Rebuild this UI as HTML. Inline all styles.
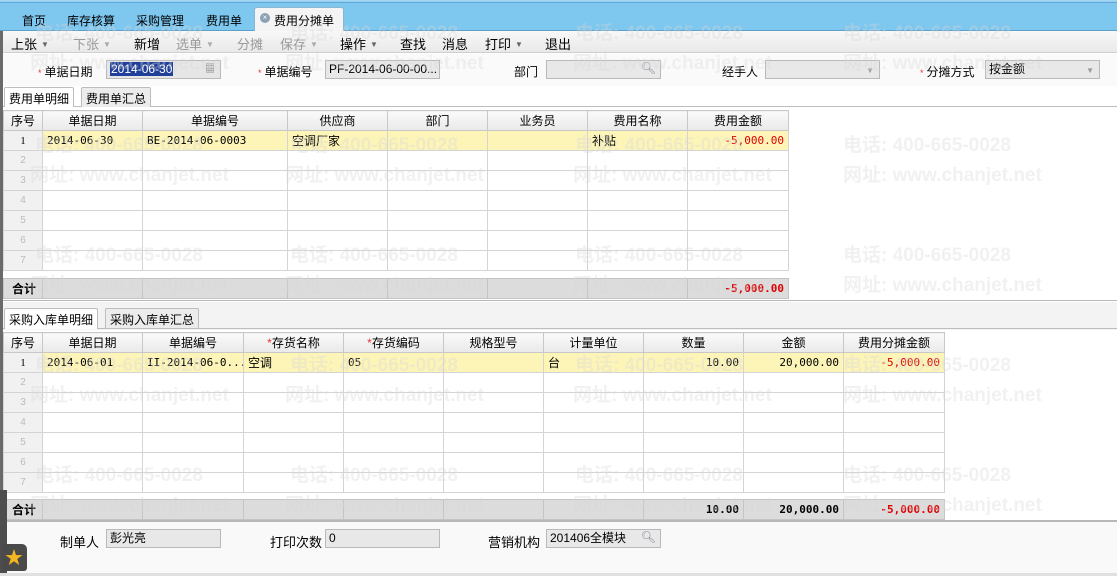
<!DOCTYPE html>
<html><head><meta charset="utf-8"><style>
*{margin:0;padding:0;box-sizing:border-box}
body{width:1117px;height:576px;overflow:hidden;background:#fff;font:12px "Liberation Sans","Noto Sans CJK SC",sans-serif;color:#000;position:relative}
.a{position:absolute}
.wm{position:absolute;color:#d8d8d8;font:bold 19px "Liberation Sans","Noto Sans CJK SC",sans-serif;white-space:nowrap;z-index:5;pointer-events:none;opacity:.35}
.tb span{position:absolute;top:34px;font-size:13px}
.dis{color:#999}
.arr{font-size:8px;color:#666;margin-left:4px;vertical-align:2px}
.inp{position:absolute;height:19px;border:1px solid #b9b9b9;background:#e8e8e8;font-size:12px;padding:1px 3px;line-height:15px;white-space:nowrap;overflow:hidden}
.lbl{position:absolute;font-size:12px}
.req{color:#e33;font-size:9px;margin-right:3px}
table{position:absolute;border-collapse:collapse;table-layout:fixed}
td{border:1px solid #d4d4d4;height:20px;font-size:12px;padding:0 4px;white-space:nowrap;overflow:hidden}
tr.h td{background:linear-gradient(#fafafa,#e9e9e9);text-align:center;border-color:#c8c8c8}
td.s{background:#f1f1f1;color:#bbb;font-size:10px;text-align:center;padding:0}
tr.y td{background:#fdf5b8;font-family:"DejaVu Sans Mono","Liberation Mono","Noto Sans CJK SC",monospace;font-size:11px}
tr.y td.s{color:#000;background:#f1f1f1;font-family:"Liberation Serif",serif;font-size:11px}
tr.t td{background:#dcdcdc;border-color:#c4c4c4;font-weight:bold;font-family:"DejaVu Sans Mono","Liberation Mono","Noto Sans CJK SC",monospace;font-size:11px}
.r{text-align:right}.red{color:#d00}
.tab{position:absolute;height:20px;border:1px solid #bdbdbd;border-bottom:none;background:#ececec;font-size:12px;padding:2px 4px;border-radius:2px 2px 0 0}
</style></head><body>
<div class="a" style="left:0;top:0;width:1117px;height:31px;background:linear-gradient(#a8d8f4,#7ec7ef 12%,#7ec7ef);border-bottom:1px solid #5d9fc8"></div>
<div class="a" style="left:0;top:2px;width:1117px;height:1px;background:#5ea7d6"></div>
<div class="a" style="top:12px;left:22px;font-size:12px">首页</div>
<div class="a" style="top:12px;left:67px;font-size:12px">库存核算</div>
<div class="a" style="top:12px;left:136px;font-size:12px">采购管理</div>
<div class="a" style="top:12px;left:206px;font-size:12px">费用单</div>
<div class="a" style="top:7px;left:254px;height:24px;width:90px;background:#f4f4f4;border:1px solid #8bb6d3;border-bottom:none;border-radius:3px 3px 0 0"></div>
<div class="a" style="top:13px;left:260px;width:10px;height:10px;border-radius:50%;background:#8aa0b4;color:#fff;font-size:8px;line-height:10px;text-align:center">×</div>
<div class="a" style="top:12px;left:274px;font-size:12px">费用分摊单</div>
<div class="a" style="left:0;top:31px;width:1117px;height:22px;background:linear-gradient(#f8f8f8,#e9e9e9);border-bottom:1px solid #cfcfcf"></div>
<div class="tb">
<span style="left:11px">上张<i class="arr">▼</i></span>
<span style="left:73px" class="dis">下张<i class="arr" style="color:#aaa">▼</i></span>
<span style="left:134px">新增</span>
<span style="left:176px" class="dis">选单<i class="arr" style="color:#aaa">▼</i></span>
<span style="left:237px" class="dis">分摊</span>
<span style="left:280px" class="dis">保存<i class="arr" style="color:#aaa">▼</i></span>
<span style="left:340px">操作<i class="arr">▼</i></span>
<span style="left:400px">查找</span>
<span style="left:442px">消息</span>
<span style="left:485px">打印<i class="arr">▼</i></span>
<span style="left:545px">退出</span>
</div>
<div class="a" style="left:0;top:54px;width:1117px;height:32px;background:#fafafa"></div>
<div class="lbl" style="left:38px;top:63px"><span class="req">*</span>单据日期</div>
<div class="inp" style="left:106px;top:60px;width:115px;background:#e6e6e6"><span style="background:#1f3f9a;color:#fff;padding:0 1px">2014-06-30</span><span style="position:absolute;right:5px;top:1px;color:#777;font-size:10px">▦</span></div>
<div class="lbl" style="left:258px;top:63px"><span class="req">*</span>单据编号</div>
<div class="inp" style="left:325px;top:60px;width:115px">PF-2014-06-00-00...</div>
<div class="lbl" style="left:514px;top:63px">部门</div>
<div class="inp" style="left:546px;top:60px;width:115px"><span style="position:absolute;right:4px;top:0;color:#889">🔍︎</span></div>
<div class="lbl" style="left:722px;top:63px">经手人</div>
<div class="inp" style="left:765px;top:60px;width:115px"><span style="position:absolute;right:5px;top:2px;font-size:8px;color:#999">▼</span></div>
<div class="lbl" style="left:920px;top:63px"><span class="req">*</span>分摊方式</div>
<div class="inp" style="left:985px;top:60px;width:115px">按金额<span style="position:absolute;right:5px;top:2px;font-size:8px;color:#999">▼</span></div>
<div class="a" style="left:0;top:106px;width:1117px;height:1px;background:#bdbdbd"></div>
<div class="tab" style="left:4px;top:87px;background:#fff;height:20px">费用单明细</div>
<div class="tab" style="left:81px;top:87px">费用单汇总</div>
<table style="left:3px;top:110px;width:785px">
<colgroup><col style="width:39px"><col style="width:100px"><col style="width:145px"><col style="width:100px"><col style="width:100px"><col style="width:100px"><col style="width:100px"><col style="width:101px"></colgroup>
<tr class="h"><td style="padding:0">序号</td><td>单据日期</td><td>单据编号</td><td>供应商</td><td>部门</td><td>业务员</td><td>费用名称</td><td>费用金额</td></tr>
<tr class="y"><td class="s">1</td><td>2014-06-30</td><td>BE-2014-06-0003</td><td style="font-family:'Liberation Sans','Noto Sans CJK SC',sans-serif;font-size:12px">空调厂家</td><td></td><td></td><td style="font-family:'Liberation Sans','Noto Sans CJK SC',sans-serif;font-size:12px">补贴</td><td class="r red">-5,000.00</td></tr>
<tr><td class="s">2</td><td></td><td></td><td></td><td></td><td></td><td></td><td></td></tr>
<tr><td class="s">3</td><td></td><td></td><td></td><td></td><td></td><td></td><td></td></tr>
<tr><td class="s">4</td><td></td><td></td><td></td><td></td><td></td><td></td><td></td></tr>
<tr><td class="s">5</td><td></td><td></td><td></td><td></td><td></td><td></td><td></td></tr>
<tr><td class="s">6</td><td></td><td></td><td></td><td></td><td></td><td></td><td></td></tr>
<tr><td class="s">7</td><td></td><td></td><td></td><td></td><td></td><td></td><td></td></tr>
</table>
<table style="left:3px;top:278px;width:785px">
<colgroup><col style="width:39px"><col style="width:100px"><col style="width:145px"><col style="width:100px"><col style="width:100px"><col style="width:100px"><col style="width:100px"><col style="width:101px"></colgroup>
<tr class="t"><td style="padding:0 0 0 8px;font-family:'Liberation Sans','Noto Sans CJK SC',sans-serif;font-size:12px">合计</td><td></td><td></td><td></td><td></td><td></td><td></td><td class="r red">-5,000.00</td></tr>
</table>
<div class="a" style="left:0;top:300px;width:1117px;height:1px;background:#b8b8b8"></div>
<div class="a" style="left:0;top:302px;width:1117px;height:28px;background:#f3f3f3"></div>
<div class="a" style="left:0;top:328px;width:1117px;height:1px;background:#bdbdbd"></div>
<div class="tab" style="left:4px;top:308px;background:#fff;height:21px">采购入库单明细</div>
<div class="tab" style="left:105px;top:308px">采购入库单汇总</div>
<table style="left:3px;top:332px;width:941px">
<colgroup><col style="width:39px"><col style="width:100px"><col style="width:101px"><col style="width:100px"><col style="width:100px"><col style="width:100px"><col style="width:100px"><col style="width:100px"><col style="width:100px"><col style="width:101px"></colgroup>
<tr class="h"><td style="padding:0">序号</td><td>单据日期</td><td>单据编号</td><td><span style="color:#e33">*</span>存货名称</td><td><span style="color:#e33">*</span>存货编码</td><td>规格型号</td><td>计量单位</td><td>数量</td><td>金额</td><td>费用分摊金额</td></tr>
<tr class="y"><td class="s">1</td><td>2014-06-01</td><td>II-2014-06-0...</td><td style="font-family:'Liberation Sans','Noto Sans CJK SC',sans-serif;font-size:12px">空调</td><td>05</td><td></td><td style="font-family:'Liberation Sans','Noto Sans CJK SC',sans-serif;font-size:12px">台</td><td class="r">10.00</td><td class="r">20,000.00</td><td class="r red">-5,000.00</td></tr>
<tr><td class="s">2</td><td></td><td></td><td></td><td></td><td></td><td></td><td></td><td></td><td></td></tr>
<tr><td class="s">3</td><td></td><td></td><td></td><td></td><td></td><td></td><td></td><td></td><td></td></tr>
<tr><td class="s">4</td><td></td><td></td><td></td><td></td><td></td><td></td><td></td><td></td><td></td></tr>
<tr><td class="s">5</td><td></td><td></td><td></td><td></td><td></td><td></td><td></td><td></td><td></td></tr>
<tr><td class="s">6</td><td></td><td></td><td></td><td></td><td></td><td></td><td></td><td></td><td></td></tr>
<tr><td class="s">7</td><td></td><td></td><td></td><td></td><td></td><td></td><td></td><td></td><td></td></tr>
</table>
<table style="left:3px;top:499px;width:941px">
<colgroup><col style="width:39px"><col style="width:100px"><col style="width:101px"><col style="width:100px"><col style="width:100px"><col style="width:100px"><col style="width:100px"><col style="width:100px"><col style="width:100px"><col style="width:101px"></colgroup>
<tr class="t"><td style="padding:0 0 0 8px;font-family:'Liberation Sans','Noto Sans CJK SC',sans-serif;font-size:12px">合计</td><td></td><td></td><td></td><td></td><td></td><td></td><td class="r">10.00</td><td class="r">20,000.00</td><td class="r red">-5,000.00</td></tr>
</table>
<div class="a" style="left:0;top:520px;width:1117px;height:2px;background:#b8b8b8"></div>
<div class="a" style="left:0;top:522px;width:1117px;height:54px;background:#f9f9f9"></div>
<div class="lbl" style="left:60px;top:532px;font-size:13px">制单人</div>
<div class="inp" style="left:106px;top:529px;width:115px">彭光亮</div>
<div class="lbl" style="left:270px;top:532px;font-size:13px">打印次数</div>
<div class="inp" style="left:325px;top:529px;width:115px">0</div>
<div class="lbl" style="left:488px;top:532px;font-size:13px">营销机构</div>
<div class="inp" style="left:546px;top:529px;width:115px">201406全模块<span style="position:absolute;right:4px;top:0;color:#889">🔍︎</span></div>
<div class="a" style="left:0;top:31px;width:3px;height:545px;background:#6a6a6a"></div>
<div class="a" style="left:0;top:490px;width:7px;height:86px;background:#4d4d4d"></div>
<div class="a" style="left:2px;top:544px;width:25px;height:27px;background:#4a4a4a;border-radius:0 5px 3px 0"></div>
<div class="a" style="left:5px;top:544px;font-size:18px;color:#f6b820">★</div>
<div class="a" style="left:0;top:573px;width:1117px;height:3px;background:#e0e0e0"></div>
<div class="wm" style="left:35px;top:18px">电话: 400-665-0028</div><div class="wm" style="left:290px;top:18px">电话: 400-665-0028</div><div class="wm" style="left:575px;top:18px">电话: 400-665-0028</div><div class="wm" style="left:843px;top:18px">电话: 400-665-0028</div>
<div class="wm" style="left:30px;top:48px">网址: www.chanjet.net</div><div class="wm" style="left:285px;top:48px">网址: www.chanjet.net</div><div class="wm" style="left:573px;top:48px">网址: www.chanjet.net</div><div class="wm" style="left:843px;top:48px">网址: www.chanjet.net</div>
<div class="wm" style="left:35px;top:130px">电话: 400-665-0028</div><div class="wm" style="left:290px;top:130px">电话: 400-665-0028</div><div class="wm" style="left:575px;top:130px">电话: 400-665-0028</div><div class="wm" style="left:843px;top:130px">电话: 400-665-0028</div>
<div class="wm" style="left:30px;top:160px">网址: www.chanjet.net</div><div class="wm" style="left:285px;top:160px">网址: www.chanjet.net</div><div class="wm" style="left:573px;top:160px">网址: www.chanjet.net</div><div class="wm" style="left:843px;top:160px">网址: www.chanjet.net</div>
<div class="wm" style="left:35px;top:240px">电话: 400-665-0028</div><div class="wm" style="left:290px;top:240px">电话: 400-665-0028</div><div class="wm" style="left:575px;top:240px">电话: 400-665-0028</div><div class="wm" style="left:843px;top:240px">电话: 400-665-0028</div>
<div class="wm" style="left:30px;top:270px">网址: www.chanjet.net</div><div class="wm" style="left:285px;top:270px">网址: www.chanjet.net</div><div class="wm" style="left:573px;top:270px">网址: www.chanjet.net</div><div class="wm" style="left:843px;top:270px">网址: www.chanjet.net</div>
<div class="wm" style="left:35px;top:350px">电话: 400-665-0028</div><div class="wm" style="left:290px;top:350px">电话: 400-665-0028</div><div class="wm" style="left:575px;top:350px">电话: 400-665-0028</div><div class="wm" style="left:843px;top:350px">电话: 400-665-0028</div>
<div class="wm" style="left:30px;top:380px">网址: www.chanjet.net</div><div class="wm" style="left:285px;top:380px">网址: www.chanjet.net</div><div class="wm" style="left:573px;top:380px">网址: www.chanjet.net</div><div class="wm" style="left:843px;top:380px">网址: www.chanjet.net</div>
<div class="wm" style="left:35px;top:460px">电话: 400-665-0028</div><div class="wm" style="left:290px;top:460px">电话: 400-665-0028</div><div class="wm" style="left:575px;top:460px">电话: 400-665-0028</div><div class="wm" style="left:843px;top:460px">电话: 400-665-0028</div>
<div class="wm" style="left:30px;top:490px">网址: www.chanjet.net</div><div class="wm" style="left:285px;top:490px">网址: www.chanjet.net</div><div class="wm" style="left:573px;top:490px">网址: www.chanjet.net</div><div class="wm" style="left:843px;top:490px">网址: www.chanjet.net</div>
</body></html>
